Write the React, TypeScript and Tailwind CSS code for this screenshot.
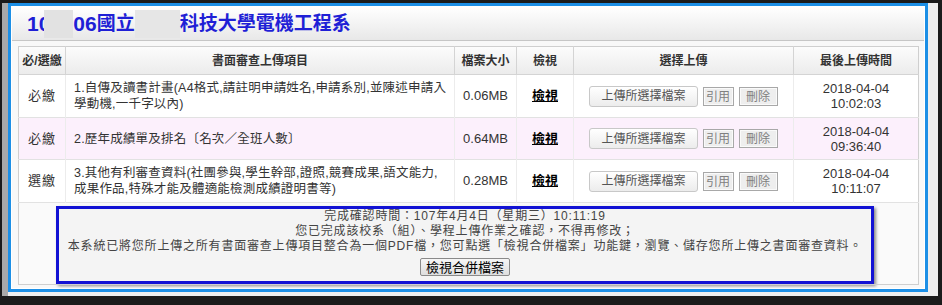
import React from 'react'

interface UploadItem {
  kind: string
  title: string[]
  size: string
  date: string
  time: string
  pink?: boolean
}

const items: UploadItem[] = [
  {
    kind: '必繳',
    title: ['1.自傳及讀書計畫(A4格式,請註明申請姓名,申請系別,並陳述申請入', '學動機,一千字以內)'],
    size: '0.06MB',
    date: '2018-04-04',
    time: '10:02:03'
  },
  {
    kind: '必繳',
    title: ['2.歷年成績單及排名〔名次／全班人數〕'],
    size: '0.64MB',
    date: '2018-04-04',
    time: '09:36:40',
    pink: true
  },
  {
    kind: '選繳',
    title: ['3.其他有利審查資料(社團參與,學生幹部,證照,競賽成果,語文能力,', '成果作品,特殊才能及體適能檢測成績證明書等)'],
    size: '0.28MB',
    date: '2018-04-04',
    time: '10:11:07'
  }
]

const font = 'font-["Liberation_Sans","Noto_Sans_CJK_TC",sans-serif]'

export default function App() {
  return (
    <div className={`w-[942px] h-[305px] bg-[#1b1b1b] pt-[3px] pl-[2px] pr-[4px] pb-[9px] ${font}`}>
      <div className="h-full bg-[#eeeeee] border-l-[6px] border-l-[#a9a9a9] pr-[10px] pb-[4px]">
        <div className="h-full border-[3px] border-[#1c8fe6] bg-white p-[1px] flex flex-col overflow-hidden">
          {/* Title */}
          <div className="h-[34px] shrink-0 bg-gradient-to-b from-white to-[#e8e8e8] border-b border-[#c6c6c6] pl-[15px] flex items-center text-[#1f1fd6] text-[19px] font-bold leading-none">
            <span className="text-[21px] font-['Liberation_Sans',sans-serif]">10</span>
            <span className="inline-block w-[29px] h-[28px] bg-[#e2e2e2] -ml-[6px]" />
            <span className="text-[21px] font-['Liberation_Sans',sans-serif]">06</span>
            <span>國立</span>
            <span className="inline-block w-[45px] h-[28px] bg-[#e6e6e6]" />
            <span>科技大學電機工程系</span>
          </div>

          {/* Table */}
          <div className="flex-1 bg-[#f8f8f8] px-[6px] pt-[5px]">
            <table className="w-[900px] table-fixed border-collapse border border-[#cfcfcf] bg-white">
              <colgroup>
                <col className="w-[47px]" />
                <col className="w-[389px]" />
                <col className="w-[62px]" />
                <col className="w-[57px]" />
                <col className="w-[220px]" />
                <col className="w-[125px]" />
              </colgroup>
              <thead>
                <tr className="h-[28px] bg-gradient-to-b from-[#fcfcfc] to-[#ebebeb] text-[12px] font-bold text-[#333]">
                  <th className="border-r border-b border-[#d4d4d4]">必/選繳</th>
                  <th className="border-r border-b border-[#d4d4d4]">書面審查上傳項目</th>
                  <th className="border-r border-b border-[#d4d4d4]">檔案大小</th>
                  <th className="border-r border-b border-[#d4d4d4]">檢視</th>
                  <th className="border-r border-b border-[#d4d4d4]">選擇上傳</th>
                  <th className="border-b border-[#d4d4d4]">最後上傳時間</th>
                </tr>
              </thead>
              <tbody className="text-[13px] text-[#333]">
                {items.map((item, i) => (
                  <tr key={i} className={`${i === 1 ? 'h-[42px]' : 'h-[43px]'} ${item.pink ? 'bg-[#fcf0fc]' : 'bg-white'} border-b border-[#e2e2e2]`}>
                    <td className="text-center tracking-[1px] border-r border-[#ececec]">{item.kind}</td>
                    <td className="pl-[8px] text-[12.5px] leading-[16px] tracking-[0.2px] whitespace-nowrap overflow-hidden border-r border-[#ececec]">
                      {item.title.map((line, j) => (
                        <div key={j}>{line}</div>
                      ))}
                    </td>
                    <td className="text-center border-r border-[#ececec]">{item.size}</td>
                    <td className="text-center border-r border-[#ececec]">
                      <span className="font-bold underline text-black">檢視</span>
                    </td>
                    <td className="border-r border-[#ececec]">
                      <div className="flex items-center justify-center gap-[5px] text-[12px]">
                        <button className="h-[21px] px-[11px] rounded-[3px] border border-[#c8c8c8] bg-gradient-to-b from-white to-[#ececec] text-[#555]">
                          上傳所選擇檔案
                        </button>
                        <button className="h-[19px] w-[31px] border border-[#a8a8a8] bg-[#eeeeee] text-[#808080] shadow-[inset_0_0_0_1px_#fafafa]">
                          引用
                        </button>
                        <button className="h-[19px] w-[39px] border border-[#a8a8a8] bg-[#eeeeee] text-[#808080] shadow-[inset_0_0_0_1px_#fafafa]">
                          刪除
                        </button>
                      </div>
                    </td>
                    <td className="text-center leading-[15px]">
                      <div>{item.date}</div>
                      <div>{item.time}</div>
                    </td>
                  </tr>
                ))}
                <tr className="h-[80px]">
                  <td colSpan={6} className="align-top pt-[3px] pl-[37px] bg-[#fafafa]">
                    <div className="w-[818px] h-[78px] border-[3px] border-[#1212d4] bg-[#f4f4f4] shadow-[2px_2px_3px_rgba(0,0,0,0.45)] flex flex-col items-center text-[12px] leading-[15px] text-[#444] tracking-[0.8px]">
                      <div>完成確認時間：107年4月4日（星期三）10:11:19</div>
                      <div>您已完成該校系（組）、學程上傳作業之確認，不得再修改；</div>
                      <div className="whitespace-nowrap">本系統已將您所上傳之所有書面審查上傳項目整合為一個PDF檔，您可點選「檢視合併檔案」功能鍵，瀏覽、儲存您所上傳之書面審查資料。</div>
                      <button className="mt-[4px] h-[18px] px-[5px] rounded-[2px] border border-[#8a8a8a] bg-gradient-to-b from-[#f6f6f6] to-[#dedede] text-[13px] leading-none text-black tracking-normal">
                        檢視合併檔案
                      </button>
                    </div>
                  </td>
                </tr>
              </tbody>
            </table>
          </div>
        </div>
      </div>
    </div>
  )
}
